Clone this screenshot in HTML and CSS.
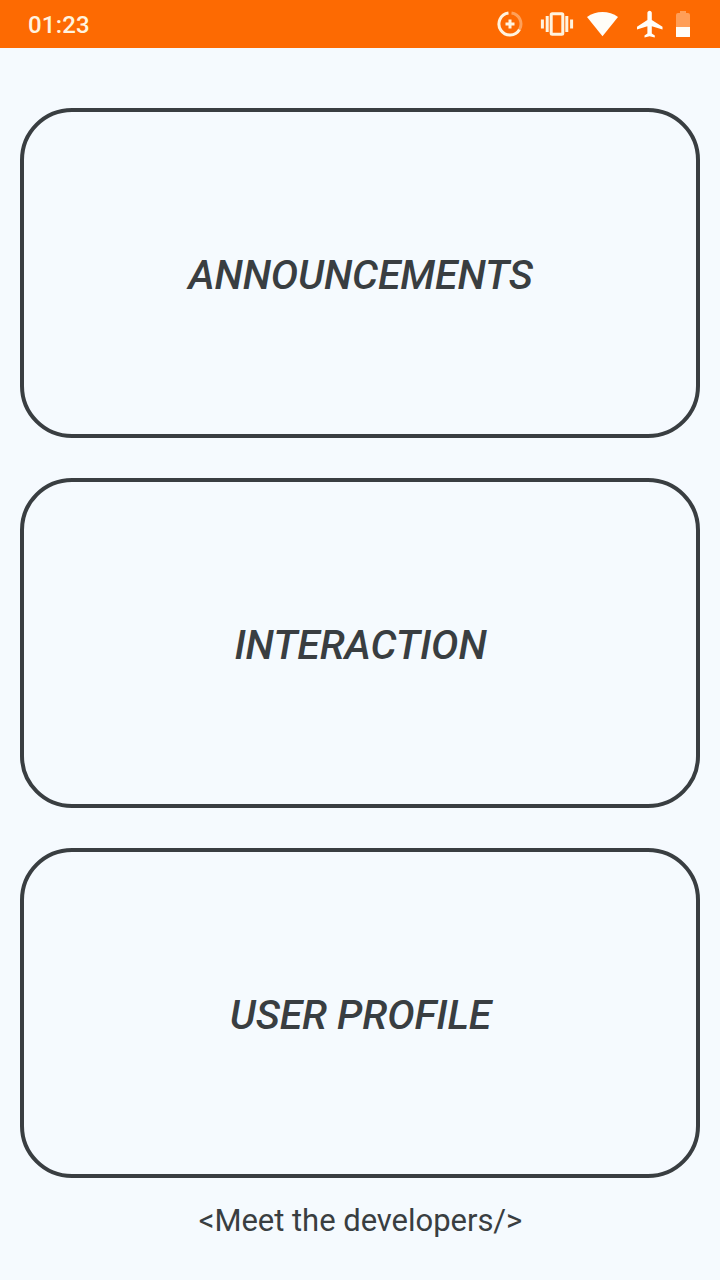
FILE: index.html
```html
<!DOCTYPE html>
<html lang="en">
<head>
<meta charset="utf-8">
<title>Home</title>
<link rel="stylesheet" href="styles.css">
</head>
<body>
<header class="status-bar">
  <span class="clock">01:23</span>
  <svg class="status-icons" width="200" height="48" viewBox="490 0 200 48">
    <g fill="none" stroke="#fff3df" stroke-width="3">
      <path d="M508.500 13.100A11 11 0 1 0 519.500 29.500"/>
      <path d="M511.500 13.100A11 11 0 0 1 519.500 29.500" stroke-opacity=".4"/>
      <path d="M510 19.500v9M505.500 24h9"/>
      <rect x="551.200" y="13.700" width="11.600" height="20.600" rx="1"/>
      <path d="M547.200 16v16M566.800 16v16"/>
      <path d="M542.400 19.500v9M571.600 19.500v9"/>
    </g>
    <path class="icon" d="M602.500 36.200L587 17.100C591.500 13.500 597 12 602.500 12S613.800 13.500 618 17.100Z"/>
    <path class="icon" d="M662.500 29.500V26.800L651.800 20V12.900C651.800 11.700 650.800 10.700 649.600 10.700S647.400 11.700 647.400 12.900V20L637 26.800V29.500L647.400 26.200V33.400L644.500 35.500V37.500L649.600 36.200L654.800 37.500V35.500L651.800 33.400V26.200Z"/>
    <path fill="#ff9e57" d="M676 27V15q0-2 2-2h2v-2h6v2h2q2 0 2 2v12Z"/>
    <path class="icon" d="M676 27h14v9.500q0 .5-.5.500h-13q-.5 0-.5-.5Z"/>
  </svg>
</header>
<main class="menu">
  <button class="card">ANNOUNCEMENTS</button>
  <button class="card">INTERACTION</button>
  <button class="card">USER PROFILE</button>
</main>
<footer class="developers">&lt;Meet the developers/&gt;</footer>
</body>
</html>
```
FILE: styles.css
```css
* { box-sizing: border-box; }
body {
  margin: 0;
  height: 1280px;
  display: flex;
  flex-direction: column;
  background: #f5fafe;
  color: #393e41;
  font-family: Roboto, sans-serif;
}
.status-bar {
  height: 48px;
  padding: 0 30px 0 28px;
  display: flex;
  align-items: center;
  justify-content: space-between;
  background: #fd6a02;
}
.clock {
  color: #fff3df;
  font-size: 24px;
  font-weight: 500;
  line-height: 28px;
  letter-spacing: .2px;
  padding-top: 2px;
}
.status-icons { display: block; }
.icon { fill: #fffdf8; }
.menu {
  display: flex;
  flex-direction: column;
  gap: 40px;
  padding: 60px 20px 0;
}
.card {
  height: 330px;
  padding: 4px 0 0 1px;
  border: 4px solid #393e41;
  border-radius: 52px;
  background: transparent;
  color: inherit;
  font: italic 500 41px/50px Roboto, sans-serif;
  letter-spacing: -.1px;
}
.developers {
  padding: 25px 0 0 1px;
  text-align: center;
  font-size: 31px;
  line-height: 36px;
  letter-spacing: -.04px;
}
```
